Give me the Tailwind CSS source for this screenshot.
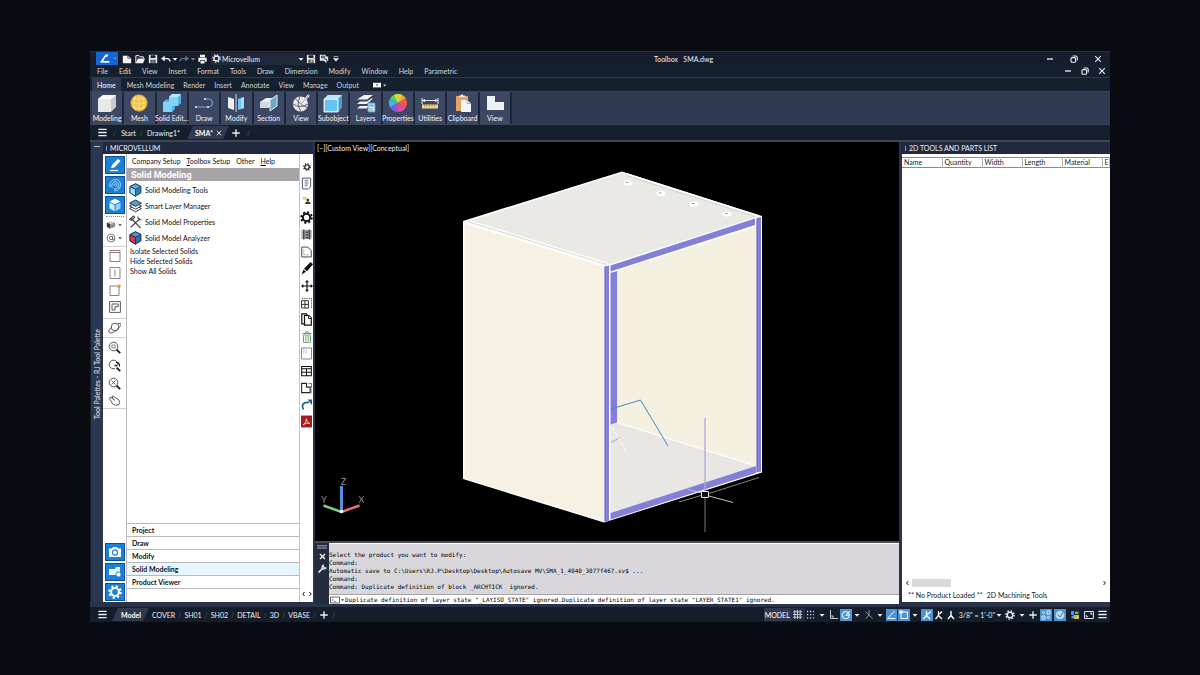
<!DOCTYPE html>
<html lang="en">
<head>
    <meta charset="UTF-8">
    <meta name="viewport" content="width=device-width, initial-scale=1.0">
    <title>Toolbox - SMA.dwg</title>
    <script src="https://cdn.jsdelivr.net/npm/@tailwindcss/browser@4"></script>
</head>
<body class="h-screen flex flex-col bg-[#0a0b10] px-[90px] pt-[51px] pb-[53px] font-['Lato',sans-serif] text-[7px] leading-[8px] text-[#eceef2]">

    <!-- shared icons -->
    <svg class="hidden">
        <symbol id="arrow" viewBox="0 0 8 8"><path d="M1.5 3h5L4 5.8z" fill="currentColor"/></symbol>
        <symbol id="menu" viewBox="0 0 12 12"><path d="M1.5 2.5h9M1.5 6h9M1.5 9.5h9" stroke="currentColor" stroke-width="1.4"/></symbol>
        <symbol id="plus" viewBox="0 0 12 12"><path d="M6 1.5v9M1.5 6h9" stroke="currentColor" stroke-width="1.6"/></symbol>
        <symbol id="gear" viewBox="0 0 16 16"><circle cx="8" cy="8" r="4.5" fill="none" stroke="currentColor" stroke-width="2.4"/><circle cx="8" cy="8" r="6.6" fill="none" stroke="currentColor" stroke-width="2.2" stroke-dasharray="2.6 2.58"/></symbol>
        <symbol id="minimize" viewBox="0 0 10 10"><path d="M2 5h6" stroke="currentColor" stroke-width="1.3"/></symbol>
        <symbol id="restore" viewBox="0 0 10 10"><rect x="2" y="3.6" width="4.6" height="4.6" rx="1" fill="none" stroke="currentColor" stroke-width="1.1"/><path d="M3.6 2h3a1.6 1.6 0 0 1 1.6 1.6v3" fill="none" stroke="currentColor" stroke-width="1.1"/></symbol>
        <symbol id="close" viewBox="0 0 10 10"><path d="M2.2 2.2l5.6 5.6M7.8 2.2L2.2 7.8" stroke="currentColor" stroke-width="1.1"/></symbol>
        <symbol id="save" viewBox="0 0 12 12"><path d="M1 1h10v10H1z" fill="#e9ebef"/><path d="M3 1.5h6v3.2H3zM3 7h6v4H3z" fill="#1b2233"/><path d="M4 8.3h4M4 9.8h4" stroke="#e9ebef" stroke-width=".8"/></symbol>
    </svg>

    <div class="flex-1 min-h-0 flex flex-col bg-[#14202d]">

        <!-- title bar -->
        <header class="h-[14px] shrink-0 flex items-center bg-[#161c2c] border-t border-[#2b303e]">
            <button aria-label="Application menu" class="ml-[6px] mr-[4px] w-[22px] h-[13px] bg-[#1266d6]">
                <svg class="w-[22px] h-[13px]" viewBox="0 0 22 13"><path d="M4 10.5L9.5 2.5h3l-1.2 2.2-1.8.3-2.3 4h6.2v1.8z" fill="#fff"/><path d="M17.5 5.5l1.3 1.5 1.3-1.5" fill="none" stroke="#8fbdf5" stroke-width=".8"/></svg>
            </button>
            <div class="flex items-center gap-[3px]">
                <button aria-label="New"><svg class="w-[10px] h-[10px]" viewBox="0 0 12 12"><path d="M1 2h6l4 3v6H1z" fill="#f2f3f5"/><path d="M7 2v3h4" fill="none" stroke="#161c2c" stroke-width=".8"/></svg></button>
                <button aria-label="Open"><svg class="w-[10px] h-[10px]" viewBox="0 0 12 12"><path d="M1 11V2h4l1 1.4h4V5" fill="none" stroke="#f2f3f5" stroke-width="1.2"/><path d="M1 11l2.4-5.5H12L9.6 11z" fill="#f2f3f5"/></svg></button>
                <button aria-label="Save"><svg class="w-[10px] h-[10px]"><use href="#save"/></svg></button>
                <button aria-label="Undo"><svg class="w-[10px] h-[10px]" viewBox="0 0 12 12"><path d="M0 5.500L4.500 2v7z" fill="#f2f3f5"/><path d="M3 5.500h4q3.500 0 4 3.500" fill="none" stroke="#f2f3f5" stroke-width="1.600"/></svg></button>
            </div>
            <svg class="w-[8px] h-[8px]"><use href="#arrow"/></svg>
            <button aria-label="Redo"><svg class="w-[10px] h-[10px] text-[#69707f]" viewBox="0 0 12 12"><path d="M12 5.500L7.500 2v7z" fill="currentColor"/><path d="M9 5.500H5q-3.500 0-4 3.500" fill="none" stroke="currentColor" stroke-width="1.400"/></svg></button>
            <svg class="w-[8px] h-[8px] text-[#69707f]"><use href="#arrow"/></svg>
            <button aria-label="Print"><svg class="w-[11px] h-[10px]" viewBox="0 0 12 12"><path d="M3 1h6v3H3zM1 4.4h10v5H9V7.6H3v1.800H1z" fill="#f2f3f5"/><path d="M3.600 8.400h4.800v3H3.600z" fill="#f2f3f5"/></svg></button>
            <label for="workspace" class="ml-[3px] pl-[1px] h-[12px] w-[94px] flex items-center bg-[#20283a]" aria-label="Workspace">
                <svg class="w-[9px] h-[9px] shrink-0"><use href="#gear"/></svg>
                <select id="workspace" class="appearance-none w-full bg-transparent text-[7px] leading-[8px] pl-[1px]"><option>Microvellum</option></select>
                <svg class="w-[8px] h-[8px] shrink-0"><use href="#arrow"/></svg>
            </label>
            <div class="flex items-center gap-[3px] ml-[1px]">
                <button aria-label="Save workspace"><svg class="w-[10px] h-[10px]" viewBox="0 0 12 12"><use href="#save"/><path d="M5.500 9.500l5-5" stroke="#d9b774" stroke-width="1.600"/></svg></button>
                <button aria-label="Save as"><svg class="w-[10px] h-[10px]" viewBox="0 0 12 12"><path d="M1 1h7v2h3v5H9v3L6 8H1z" fill="#e9ebef"/><path d="M3 2.600h3.400v2H3zM6 6h3v2" fill="none" stroke="#1b2233"/></svg></button>
                <svg class="w-[8px] h-[8px]" viewBox="0 0 8 8"><path d="M1.500 1.600h5M1.500 3.400h5L4 6.200z" stroke="currentColor" stroke-width=".6" fill="currentColor"/></svg>
            </div>
            <h1 class="flex-1 pr-[18px] text-center whitespace-pre">Toolbox   SMA.dwg</h1>
            <div class="flex gap-[14px] pr-[7px]">
                <button aria-label="Minimize"><svg class="w-[10px] h-[10px]"><use href="#minimize"/></svg></button>
                <button aria-label="Restore"><svg class="w-[10px] h-[10px]"><use href="#restore"/></svg></button>
                <button aria-label="Close"><svg class="w-[10px] h-[10px]"><use href="#close"/></svg></button>
            </div>
        </header>

        <!-- menu bar -->
        <nav class="h-[13px] shrink-0 flex items-center gap-[11px] pl-[7px] pr-[3px] border-b border-[#2f3a47] text-[#d6d9df]">
            <a href="#">File</a>
            <a href="#">Edit</a>
            <a href="#">View</a>
            <a href="#">Insert</a>
            <a href="#">Format</a>
            <a href="#">Tools</a>
            <a href="#">Draw</a>
            <a href="#">Dimension</a>
            <a href="#">Modify</a>
            <a href="#">Window</a>
            <a href="#">Help</a>
            <a href="#">Parametric</a>
            <div class="flex gap-[7px] ml-auto text-[#eceef2]">
                <button aria-label="Minimize drawing"><svg class="w-[10px] h-[10px]"><use href="#minimize"/></svg></button>
                <button aria-label="Restore drawing"><svg class="w-[10px] h-[10px]"><use href="#restore"/></svg></button>
                <button aria-label="Close drawing"><svg class="w-[10px] h-[10px]"><use href="#close"/></svg></button>
            </div>
        </nav>

        <!-- ribbon tabs -->
        <nav class="h-[13px] shrink-0 flex items-center gap-[9px] pl-[2px] text-[#d0d3da]">
            <a href="#" class="h-full px-[5px] -mr-[3px] flex items-center bg-[#2f3a50] text-white">Home</a>
            <a href="#">Mesh Modeling</a>
            <a href="#">Render</a>
            <a href="#">Insert</a>
            <a href="#">Annotate</a>
            <a href="#">View</a>
            <a href="#">Manage</a>
            <a href="#">Output</a>
            <button aria-label="Ribbon display" class="ml-[5px]"><svg class="w-[14px] h-[8px]" viewBox="0 0 14 8"><rect x="0" y="1.800" width="8" height="4.600" fill="#fff"/><circle cx="4" cy="4" r=".8" fill="#14202d"/><path d="M10 3.400h3.400l-1.700 2z" fill="#cfd3da"/></svg></button>
        </nav>

        <!-- ribbon panels -->
        <div class="h-[34px] shrink-0 bg-[#2f3a52] border-y border-[#39445b] pl-[2px]">
            <div class="w-[420px] h-full grid grid-cols-13 text-[#f4f5f9] *:flex *:flex-col *:items-center *:justify-between *:bg-[#3c4763] *:border-r-2 *:border-[#1d2638] *:whitespace-nowrap *:pt-[1px] *:pb-[2px]">
                <button><svg class="w-[22px] h-[20px]" viewBox="0 0 22 20"><path d="M2 6l5-4h13v12l-5 5H2z" fill="#c9cace"/><path d="M2 6h13v13H2z" fill="#e9e9ea"/><path d="M2 6l5-4h13l-5 4z" fill="#fafafa"/></svg>Modeling</button>
                <button><svg class="w-[22px] h-[20px]" viewBox="0 0 22 20"><circle cx="11" cy="10" r="8.300" fill="#f3c145"/><path d="M3 9q8 4 16 0M4 14q7 3 14 0M11 2v16M8 2q-4 8 0 16M14 2q4 8 0 16M5 5q6 2.500 12 0" fill="none" stroke="#fbe6a0" stroke-width=".8"/><circle cx="11" cy="10" r="8.300" fill="none" stroke="#c58f22" stroke-width=".7"/></svg>Mesh</button>
                <button><svg class="w-[22px] h-[20px]" viewBox="0 0 22 20"><path d="M2 9l3-2.500h3V4l3-3h9v9l-3 3h-3v3l-3 3H2z" fill="#49b5ea"/><path d="M2 9h6V4h9v9h-6v6H2z" fill="#85d2f7"/><path d="M8 4l3-3h9l-3 3z" fill="#b8e6fc"/></svg>Solid Edit...</button>
                <button><svg class="w-[22px] h-[20px]" viewBox="0 0 22 20"><path d="M3 14h12.500a4 4 0 0 0 0-8H12" fill="none" stroke="#83a9d6" stroke-width="1"/><path d="M2 13h2v2H2zM14 13h2v2h-2zM11 5h2v2h-2z" fill="#aecbf0"/></svg>Draw</button>
                <button><svg class="w-[22px] h-[20px]" viewBox="0 0 22 20"><path d="M3 4l6 2v11l-6-2z" fill="#efefef"/><path d="M19 4l-6 2v11l6-2z" fill="#6ec6f2"/><path d="M16 5l3-1v11l-3 1z" fill="#a5dcf8"/><path d="M11 1v18" stroke="#d7dbe4" stroke-width="1"/></svg>Modify</button>
                <button><svg class="w-[22px] h-[20px]" viewBox="0 0 22 20"><path d="M2 9l6-4h6v9H2z" fill="#f0f0f0"/><path d="M2 9h9v6H2z" fill="#d5d6d9"/><path d="M12 7l7-5v11l-7 5z" fill="#6aa7c9" stroke="#d9f1fb" stroke-width="1"/></svg>Section</button>
                <button><svg class="w-[22px] h-[20px]" viewBox="0 0 22 20"><circle cx="10.500" cy="11" r="7.600" fill="#e8e8e8"/><path d="M3 11q7 5 15 0M5 5.500q6 7 12 9M10 3.500q-4 8 1 15" fill="none" stroke="#5d6475" stroke-width="1"/><path d="M11 11l8-9" stroke="#fff" stroke-width="2.200"/><path d="M11 11l8-9" stroke="#555c6e" stroke-width=".7"/></svg>View</button>
                <button><svg class="w-[22px] h-[20px]" viewBox="0 0 22 20"><path d="M2 6l4-4h14v12l-4 5H2z" fill="#d8dbe0"/><path d="M3 7h12v11H3z" fill="#67c3f1"/><path d="M2 6l4-4h14l-4 4z" fill="#b9e6fb"/><path d="M16 6l4-4v12l-4 5z" fill="#4b9cc6"/><path d="M2 6h14v13H2z" fill="none" stroke="#e7f4fb" stroke-width=".9"/></svg>Subobject</button>
                <button><svg class="w-[22px] h-[20px]" viewBox="0 0 22 20"><path d="M2 6.500L9 2h9l-6 4.500zM2 11l3-2.500h7l4.500-3H18L12 11zM2 15.500L5 13h7l4.500-3H18l-6 5.500z" fill="#f0f0f0"/><path d="M13 10h7v9h-7z" fill="#dff1fa" stroke="#5193bd"/><path d="M14.500 11.500h4v2h-4z" fill="#4ea8d8"/><path d="M14.500 15.500h4M14.500 17.300h4" stroke="#466" stroke-width=".9" stroke-dasharray="1"/></svg>Layers</button>
                <button><svg class="w-[22px] h-[20px]" viewBox="0 0 22 20"><path d="M11 10V1a9 9 0 0 1 7.800 4.500z" fill="#f9a23a"/><path d="M11 10l7.800-4.500a9 9 0 0 1 0 9z" fill="#f0594a"/><path d="M11 10l7.800 4.500A9 9 0 0 1 11 19z" fill="#dc4a9c"/><path d="M11 10v9a9 9 0 0 1-7.800-4.500z" fill="#8d58e0"/><path d="M11 10l-7.800 4.500a9 9 0 0 1 0-9z" fill="#38b9dd"/><path d="M11 10L3.200 5.500A9 9 0 0 1 11 1z" fill="#69cb55"/><path d="M11 10L7 2a9 9 0 0 1 8 0z" fill="#d9d545"/></svg>Properties</button>
                <button><svg class="w-[22px] h-[20px]" viewBox="0 0 22 20"><path d="M3 5v6M19 5v6M3 7.500h16" stroke="#e9edf5" stroke-width="1"/><path d="M3 7.500l3-1.700v3.400zM19 7.500l-3-1.700v3.400z" fill="#e9edf5"/><path d="M3 11.500h16v4H3z" fill="#f2d58c"/><path d="M5.500 11.500v2M8 11.500v2M10.500 11.500v2M13 11.500v2M15.500 11.500v2" stroke="#8a6d2b" stroke-width=".8"/></svg>Utilities</button>
                <button><svg class="w-[22px] h-[20px]" viewBox="0 0 22 20"><path d="M4 3h12v15H4z" fill="#dfa562"/><path d="M7 4h6V2.500h-1.500L10 1 8.500 2.500H7z" fill="#e8eaee"/><path d="M9 7h6l4 3.500V19H9z" fill="#f3f4f7"/><path d="M15 7v3.500h4" fill="none" stroke="#99a2b5" stroke-width=".8"/></svg>Clipboard</button>
                <button><svg class="w-[22px] h-[20px]" viewBox="0 0 22 20"><path d="M3 3h8v6h9v8H3z" fill="#eef0f3"/></svg>View</button>
            </div>
        </div>

        <!-- drawing tabs -->
        <nav class="h-[15px] shrink-0 flex items-center pl-[7px]">
            <button aria-label="Drawing list"><svg class="w-[11px] h-[11px]"><use href="#menu"/></svg></button>
            <span class="px-[5px] text-[#4f5a6a]">/</span>
            <a href="#">Start</a>
            <span class="px-[4px] text-[#4f5a6a]">/</span>
            <a href="#">Drawing1*</a>
            <div class="ml-[7px] h-[13px] flex items-center gap-[2px] pl-[8px] pr-[6px] bg-[#2f3a50] [clip-path:polygon(6px_0,100%_0,calc(100%-6px)_100%,0_100%)]">
                <a href="#" class="font-bold text-white">SMA*</a>
                <button aria-label="Close SMA"><svg class="w-[8px] h-[8px]"><use href="#close"/></svg></button>
            </div>
            <button aria-label="New drawing" class="ml-[2px]"><svg class="w-[10px] h-[10px]"><use href="#plus"/></svg></button>
            <span class="px-[6px] text-[#4f5a6a]">/</span>
        </nav>

        <!-- workspace -->
        <main class="flex-1 min-h-0 flex bg-[#2b3348] border-t-2 border-[#3f4552]">

            <!-- tool palette -->
            <aside class="w-[223px] shrink-0 mb-[5px] flex">
                <div class="w-[13px] flex flex-col items-center bg-[#2a3750] border-l border-[#141b2a]">
                    <span class="mt-[4px] w-[6px] h-px bg-[#b9c0cc]"></span>
                    <span class="mt-[182px] [writing-mode:vertical-rl] rotate-180 whitespace-nowrap">Tool Palettes - RJ Tool Palette</span>
                </div>
                <div class="flex-1 flex flex-col">
                    <h2 class="h-[12px] flex items-center gap-[3px] pl-[3px] bg-[#202940]"><span class="w-px h-[5px] bg-[#8d96a8]"></span>MICROVELLUM</h2>
                    <div class="flex-1 flex bg-white text-[#111115]">

                        <div class="w-[24px] flex flex-col items-center pt-[2px] pb-px border-r border-[#b9b9bd] text-[#4b4b4f]">
                            <div class="flex flex-col gap-[2px] *:w-[20px] *:h-[18px] *:bg-[#1b80d8] *:border *:border-[#0b4f97] *:flex *:items-center *:justify-center">
                                <button aria-label="Draw"><svg class="w-[14px] h-[14px]" viewBox="0 0 14 14"><path d="M3 10l1-3 6-6 2.500 2-6 6.500z" fill="#fff"/><path d="M2 12.500h8" stroke="#fff" stroke-width="1.200"/></svg></button>
                                <button aria-label="Texture"><svg class="w-[14px] h-[14px]" viewBox="0 0 14 14" fill="none" stroke="#a9dcff" stroke-width="1"><path d="M2 9C1 4 5 1 8.500 1.500S13 6 12 9s-4 4.500-6 3.500"/><path d="M4 9.500C3 6 5.500 3.500 8 3.800S11 7 10 9s-3 2.500-4 1.500"/><path d="M6 8c0-2 1-2.500 2-2.200S9 8 7.500 8.500"/></svg></button>
                                <button aria-label="Solids"><svg class="w-[14px] h-[14px]" viewBox="0 0 14 14"><path d="M7 .8l5.500 2.700L7 6.200 1.500 3.500z" fill="#fff"/><path d="M1.500 4.500l5 2.500v6.200l-5-2.700z" fill="#d4efff"/><path d="M12.500 4.500l-5 2.500v6.200l5-2.700z" fill="#8fd0fa"/></svg></button>
                            </div>
                            <div class="w-[18px] mt-[2px] border-t border-dotted border-[#8a8a8e]"></div>
                            <div class="h-[30px] w-full py-[2px] flex flex-col justify-around items-start pl-[3px] border-b border-[#d0d0d3]">
                                <button aria-label="Visual style" class="flex items-center gap-px"><svg class="w-[10px] h-[10px]" viewBox="0 0 12 12"><path d="M1 3l4 1.500v6L1 8z" fill="#333"/><path d="M5 4.500L11 3v5l-6 2.500z" fill="#8d9097"/><path d="M1 3l5-1.500L11 3 5 4.500z" fill="#c6c8cc"/></svg><svg class="w-[6px] h-[6px]"><use href="#arrow"/></svg></button>
                                <button aria-label="Orbit" class="flex items-center gap-px"><svg class="w-[10px] h-[10px]" viewBox="0 0 12 12" fill="none" stroke="currentColor" stroke-width=".9"><circle cx="6" cy="6" r="4.700"/><circle cx="6" cy="6" r="2"/><path d="M8 4v4h2.500"/></svg><svg class="w-[6px] h-[6px]"><use href="#arrow"/></svg></button>
                            </div>
                            <div class="h-[72px] w-full pb-[3px] flex flex-col justify-around items-center border-b border-[#d0d0d3]">
                                <button aria-label="Sheet"><svg class="w-[12px] h-[12px]" viewBox="0 0 12 12"><path d="M1 .5h10v11H1zM1 2.500h10" fill="none" stroke="#8a6f72" stroke-width=".9"/></svg></button>
                                <button aria-label="Split sheet"><svg class="w-[12px] h-[12px]" viewBox="0 0 12 12"><path d="M1 .5h10v11H1zM6 2.500v7" fill="none" stroke="#8a7376" stroke-width=".9"/></svg></button>
                                <button aria-label="New sheet"><svg class="w-[12px] h-[12px]" viewBox="0 0 12 12"><path d="M1 2h9v9.500H1z" fill="none" stroke="#77777b" stroke-width=".9"/><circle cx="10" cy="2.200" r="1.800" fill="#e0a040"/></svg></button>
                                <button aria-label="Offset"><svg class="w-[12px] h-[12px]" viewBox="0 0 12 12" fill="none" stroke="currentColor" stroke-width=".9"><path d="M.6.600h10.800v10.800H.600z"/><path d="M3 9V3h6.300v2.700H6V9z"/></svg></button>
                            </div>
                            <div class="h-[19px] w-full flex items-center justify-center border-b border-[#d0d0d3]">
                                <button aria-label="Free orbit"><svg class="w-[13px] h-[12px]" viewBox="0 0 13 12" fill="none" stroke="currentColor" stroke-width=".9"><circle cx="7" cy="5" r="3.800"/><path d="M4 5C0 8 0 11 3 11s6-3 9-6.500S11 1 9.500 1.800"/></svg></button>
                            </div>
                            <div class="h-[71px] w-full flex flex-col justify-around items-center border-b border-[#d0d0d3]">
                                <button aria-label="Zoom window"><svg class="w-[13px] h-[13px]" viewBox="0 0 13 13"><circle cx="5.500" cy="5.500" r="4.300" fill="none" stroke="#55555a"/><path d="M3.800 4h3.400v3H3.800z" fill="none" stroke="#77777b" stroke-width=".8"/><path d="M8.600 8.600l3.600 3.600" stroke="#1b1b1f" stroke-width="1.900"/></svg></button>
                                <button aria-label="Zoom previous"><svg class="w-[13px] h-[13px]" viewBox="0 0 13 13"><path d="M9.800 5.500A4.300 4.300 0 1 0 7 9.500" fill="none" stroke="#55555a"/><path d="M8 3.500q3.500-.5 3.500 4M6.500 6.500h3" fill="none" stroke="#1b1b1f" stroke-width="1.300"/><path d="M8.600 8.600l3.600 3.600" stroke="#1b1b1f" stroke-width="1.900"/></svg></button>
                                <button aria-label="Zoom extents"><svg class="w-[13px] h-[13px]" viewBox="0 0 13 13"><circle cx="5.500" cy="5.500" r="4.300" fill="none" stroke="#55555a"/><path d="M3.500 3.500l4 4M7.500 3.500l-4 4" stroke="#55555a" stroke-width=".9"/><path d="M8.600 8.600l3.600 3.600" stroke="#1b1b1f" stroke-width="1.900"/></svg></button>
                                <button aria-label="Pan"><svg class="w-[13px] h-[11px]" viewBox="0 0 13 11" fill="none" stroke="currentColor" stroke-width=".9"><path d="M3 6L1.500 3.500Q1.500 2 3 2.500L5 4 4 1.500Q5 .5 6.500 2L11 5q1.500 3-.5 5H7Q4 9.500 3 6zM5 4l2 1.500"/></svg></button>
                            </div>
                            <div class="mt-auto flex flex-col gap-[2px] *:w-[20px] *:h-[18px] *:bg-[#1b80d8] *:border *:border-[#0b4f97] *:flex *:items-center *:justify-center">
                                <button aria-label="Camera"><svg class="w-[14px] h-[12px]" viewBox="0 0 14 12"><path d="M1 2.500h3L5 1h4l1 1.500h3V11H1z" fill="#fff"/><circle cx="7" cy="6.500" r="2.600" fill="none" stroke="#1b80d8" stroke-width="1.200"/></svg></button>
                                <button aria-label="Project settings"><svg class="w-[14px] h-[12px]" viewBox="0 0 14 12"><path d="M1 3h6l1-2h4v8H1z" fill="#e8f5ff"/><circle cx="10.500" cy="8.500" r="2.600" fill="#fff" stroke="#1b80d8"/></svg></button>
                                <button aria-label="Settings" class="text-white"><svg class="w-[14px] h-[14px]"><use href="#gear"/></svg></button>
                            </div>
                        </div>

                        <div class="flex-1 flex flex-col">
                            <nav class="h-[14px] flex items-center gap-[6px] pl-[5px]">
                                <a href="#">Company Setup</a>
                                <a href="#"><u>T</u>oolbox Setup</a>
                                <a href="#">Other</a>
                                <a href="#"><u>H</u>elp</a>
                            </nav>
                            <h3 class="h-[13px] flex items-center pl-[4px] bg-[#a7a4a7] text-white text-[9px] font-bold font-['Roboto',sans-serif]">Solid Modeling</h3>
                            <ul class="pt-px pl-[2px] *:h-[16px] *:flex *:items-center *:gap-[3px]">
                                <li><svg class="w-[13px] h-[14px]" viewBox="0 0 13 14" stroke="#16364f" stroke-width=".8"><path d="M6.500.800l5.500 2.700v6.500l-5.500 3.200L1 10V3.500z" fill="#2f80bd"/><path d="M1 3.500l5.500 2.700v7L1 10z" fill="#a9dbf7"/><path d="M1 3.500L6.500.800l5.500 2.700-5.500 2.700z" fill="#5eaee0"/></svg><a href="#">Solid Modeling Tools</a></li>
                                <li><svg class="w-[13px] h-[14px]" viewBox="0 0 13 14" stroke="#182838" stroke-width=".9"><path d="M.6 9.500L6.500 6.500l5.900 3-5.900 3.200z" fill="#fff"/><path d="M.6 7L6.500 4l5.900 3-5.900 3.200z" fill="#fff"/><path d="M.6 4.200L6.500 1l5.900 3.200-5.900 3.200z" fill="#4f9fd4"/></svg><a href="#">Smart Layer Manager</a></li>
                                <li><svg class="w-[13px] h-[14px]" viewBox="0 0 13 14" fill="none" stroke="#4a4a4e" stroke-width="1.100"><path d="M2 3l9.500 10M11 3.500L1.500 12.500M.6 4.500L4.500 1l1.200 1.200-3 3.200zM9 1.500q-1 3 3.400 3.200"/></svg><a href="#">Solid Model Properties</a></li>
                                <li><svg class="w-[13px] h-[14px]" viewBox="0 0 13 14" stroke="#16263f" stroke-width=".8"><path d="M6.500.800l5.500 2.700v6.500l-5.500 3.200L1 10V3.500z" fill="#2b6fb0"/><path d="M1 3.500l5.500 2.700v7L1 10z" fill="#d9364a"/><path d="M1 3.500L6.500.800l5.500 2.700-5.500 2.700z" fill="#4b9bd6"/></svg><a href="#">Solid Model Analyzer</a></li>
                            </ul>
                            <ul class="pl-[3px] leading-[10px]">
                                <li><a href="#">Isolate Selected Solids</a></li>
                                <li><a href="#">Hide Selected Solids</a></li>
                                <li><a href="#">Show All Solids</a></li>
                            </ul>
                            <ul class="mt-auto mb-[13px] border-b border-[#b9b9bd] font-bold *:h-[13px] *:pl-[5px] *:pb-px *:flex *:items-center *:border-t *:border-[#b9b9bd]">
                                <li><a href="#">Project</a></li>
                                <li><a href="#">Draw</a></li>
                                <li><a href="#">Modify</a></li>
                                <li class="bg-[#e8f7fd]"><a href="#">Solid Modeling</a></li>
                                <li><a href="#">Product Viewer</a></li>
                            </ul>
                        </div>

                        <div class="w-[14px] flex flex-col items-center pt-[4px] border-l border-[#c3c3c7] *:h-[17px] *:flex *:items-center">
                            <button aria-label="Options"><svg class="w-[8px] h-[8px]"><use href="#gear"/></svg></button>
                            <button aria-label="Report"><svg class="w-[11px] h-[13px]" viewBox="0 0 12 13" fill="none" stroke="#34495e"><path d="M1.500.600h9v9.400L8 12.400H1.500z"/><path d="M4 3h4M4 5h4M4 7h4M4 9h3" stroke-width=".8"/></svg></button>
                            <button aria-label="Users"><svg class="w-[9px] h-[9px]" viewBox="0 0 10 10"><path d="M1 1h4v3H1z" fill="#e3cf58"/><circle cx="6.500" cy="4.500" r="1.500" fill="#333"/><path d="M3.500 9q0-3 3-3t3 3z" fill="#333"/></svg></button>
                            <button aria-label="Setup"><svg class="w-[13px] h-[13px]"><use href="#gear"/></svg></button>
                            <button aria-label="Library"><svg class="w-[11px] h-[11px]" viewBox="0 0 12 11"><path d="M.5.500h11v10H.500z" fill="#9a9aa0"/><path d="M3 0v11M9 0v11M5 3h3M5 6h3M5 9h3" stroke="#222"/><path d="M1 2h1M1 5h1M1 8h1" stroke="#fff"/></svg></button>
                            <button aria-label="Page"><svg class="w-[11px] h-[12px]" viewBox="0 0 12 12" fill="none" stroke="#3a3a3e"><path d="M.8.600h6.500l3.900 4v6.800H.800z"/><path d="M3 3v6h6" stroke-width=".7" stroke-dasharray="1"/></svg></button>
                            <button aria-label="Edit"><svg class="w-[12px] h-[13px]" viewBox="0 0 12 13"><path d="M9.500 0l2.500 2.300-6 7-3-2.600z" fill="#111"/><path d="M2.600 7.500l2.400 2.200L.5 12.500z" fill="#111"/></svg></button>
                            <button aria-label="Move"><svg class="w-[12px] h-[12px]" viewBox="0 0 12 12"><path d="M6 1v10M1 6h10" stroke="#111" stroke-width="1.200"/><path d="M6 0l2 2.300H4zM6 12l2-2.300H4zM0 6l2.300-2v4zM12 6L9.700 4v4z" fill="#111"/></svg></button>
                            <button aria-label="Align"><svg class="w-[11px] h-[12px]" viewBox="0 0 12 12" fill="none" stroke="#222"><path d="M.6 3.500h7.500v8H.600zM.6 7.500h7.500M4.300 3.500v8"/><path d="M1 1h10.500v11" stroke-dasharray="1 1"/></svg></button>
                            <button aria-label="Copy"><svg class="w-[11px] h-[13px]" viewBox="0 0 11 13" fill="#fff" stroke="#111" stroke-width="1.200"><path d="M.8.800h5v10h-5z"/><path d="M3.500 2.500H8l2.300 2.500v7.200H3.500z"/><path d="M7.500 2.500v3h3" stroke-width=".9"/></svg></button>
                            <button aria-label="Delete"><svg class="w-[10px] h-[12px]" viewBox="0 0 10 12" fill="none" stroke="#6f9d70"><path d="M.5 2.500h9M3.500 2.500V.800h3v1.700M1.500 4h7v7.400h-7zM3.800 5v5.500M6.200 5v5.500"/></svg></button>
                            <button aria-label="Elevation"><svg class="w-[11px] h-[13px]" viewBox="0 0 12 13" fill="none" stroke="#77777b"><path d="M.5.500h11v12H.500z"/><path d="M2 3h5M2 5h5M3 2v5M5.500 2v5" stroke="#8ea3c4" stroke-width=".7" stroke-dasharray="1"/></svg></button>
                            <button aria-label="Cabinet"><svg class="w-[11px] h-[12px]" viewBox="0 0 12 12" fill="none" stroke="#111"><path d="M.7 1h10.600v10.300H.700zM.7 3.500h10.600M6 3.500v7.800M.7 7.300h10.600" stroke-width="1.100"/></svg></button>
                            <button aria-label="Room"><svg class="w-[11px] h-[12px]" viewBox="0 0 12 12" fill="none" stroke="#222"><path d="M.7 1H6v4h4v6H.700z" stroke-width="1.200"/><path d="M8 1h3.500v4" stroke-width=".7"/><path d="M11.500 5v7" stroke-dasharray="1" stroke-width=".7"/></svg></button>
                            <button aria-label="Refresh"><svg class="w-[11px] h-[11px]" viewBox="0 0 11 11"><path d="M2.500 10.500Q-1 3 8 3.500" fill="none" stroke="#1d5f86" stroke-width="1.700"/><path d="M6.500.500L11 .5V6z" fill="#1d5f86"/></svg></button>
                            <button aria-label="PDF"><svg class="w-[11px] h-[13px]" viewBox="0 0 12 13"><path d="M0 0h12v13H0z" fill="#a91b1e"/><path d="M2.500 10Q6.500 7 5.800 3.500 5.800 7 9.500 8.500 5.500 7.800 2.500 10z" fill="none" stroke="#fff" stroke-width=".8"/></svg></button>
                            <div class="mt-auto justify-center"><svg class="w-[12px] h-[6px]" viewBox="0 0 12 6" fill="none" stroke="#111"><path d="M3.500 1L1.800 3l1.700 2M8.500 1l1.700 2-1.700 2"/></svg></div>
                        </div>
                    </div>
                </div>
            </aside>

            <!-- model view and command line -->
            <section class="flex-1 min-w-0 ml-[2px] mb-[3px] flex flex-col">
                <div class="relative flex-1 min-h-0 bg-black">
                    <span class="absolute left-[2px] top-[2px]">[−][Custom View][Conceptual]</span>
                    <svg class="block w-full h-full" viewBox="315 142 584 399" preserveAspectRatio="xMidYMid slice">
                        <!-- cabinet -->
                        <path d="M463 221L622 171.500 762 216V472.500L604 522.500 463 479z" fill="#fff"/>
                        <path d="M464.500 223.500L604 267v254L464.500 478.500z" fill="#f7f1e4"/>
                        <path d="M467 221.500L622 173l136 43.500L609 264.500z" fill="#eae9e6"/>
                        <path d="M470 221l139 43M627 174l130 41.500" stroke="#fff" stroke-width="1.400"/>
                        <path d="M468 221.600l139 43M626 175.500l129 41" stroke="#c9c8c6" stroke-width=".7"/>
                        <path d="M617 270.500l139-43.500v239l-139-43.500z" fill="#f5f1e1"/>
                        <path d="M610.500 422.500l7 0L756 466 610.500 513z" fill="#e8e7e3"/>
                        <path d="M617 422.500L756 466" stroke="#fff" stroke-width="1.200"/>
                        <path d="M610.500 265.500L755 218.500v6.500L610.500 271.500z" fill="#8480d8"/>
                        <path d="M604.500 266.500l4.500-1V521l-4.500 1z" fill="#8480d8"/>
                        <path d="M610.500 273l6.500-2v151.500l-6.500 2z" fill="#8480d8"/>
                        <path d="M756.500 218l4.500-1v254.500l-4.500 1z" fill="#8480d8"/>
                        <path d="M610.500 513L756 466v7L610.500 519.500z" fill="#8480d8"/>
                        <path d="M605 267v254M757 219v253" stroke="#5f5cad" stroke-width=".6"/>
                        <g fill="#fff"><ellipse cx="628" cy="183" rx="4.500" ry="2.600"/><ellipse cx="661" cy="193.500" rx="4.500" ry="2.600"/><ellipse cx="694" cy="204" rx="4.500" ry="2.600"/><ellipse cx="727" cy="214" rx="4.500" ry="2.600"/></g>
                        <path d="M626 182.500h2.500M659 193h2.500M692 203.500h2.500M725 213.500h2.500" stroke="#888" stroke-width=".9"/>
                        <path d="M611 409l29.500-9L668 446" fill="none" stroke="#4a86b8" stroke-width="1"/>
                        <path d="M611 442.500l9-5" stroke="#b4a9dd" stroke-width="1.200"/>
                        <path d="M612 427l15 26" stroke="#fff" stroke-width="1" stroke-dasharray="4 2"/>
                        <!-- crosshair -->
                        <path d="M705 418v73" stroke="#b6a4d6" stroke-width="1.300"/>
                        <path d="M705 498v34" stroke="#73757a" stroke-width="1"/>
                        <path d="M679 502l22-6.500M709 493.500l50-16" stroke="#85857a" stroke-width="1"/>
                        <path d="M687 489l14 4M709 496l24 6.500" stroke="#b9c2bd" stroke-width="1"/>
                        <path d="M701.500 491.500h7v6h-7z" fill="#111" stroke="#e5e5e5" stroke-width="1"/>
                        <!-- ucs axes -->
                        <path d="M341.500 512V486" stroke="#5a8fe0" stroke-width="3"/>
                        <path d="M341.500 512l-18-6.500" stroke="#7bd08a" stroke-width="2.400"/>
                        <path d="M341.500 512l18-6.500" stroke="#e5727c" stroke-width="2.400"/>
                        <circle cx="341.500" cy="511.500" r="1.800" fill="#fff"/>
                        <g fill="#8b8f96" font-size="9" text-anchor="middle"><text x="343.500" y="485">Z</text><text x="324" y="503">Y</text><text x="361.500" y="503">X</text></g>
                    </svg>
                </div>
                <div class="h-[63px] shrink-0 flex border-t-2 border-[#4a4b56] bg-[#252b3f]">
                    <div class="w-[14px] flex flex-col items-center pt-[2px] gap-[3px]">
                        <svg class="w-[10px] h-[4px]" viewBox="0 0 10 4"><path d="M0 .800h10M0 3h10" stroke="#a6abb7"/></svg>
                        <button aria-label="Close command line"><svg class="w-[9px] h-[9px]" viewBox="0 0 10 10"><path d="M2.200 2.200l5.600 5.600M7.800 2.200L2.200 7.800" stroke="currentColor" stroke-width="1.600"/></svg></button>
                        <button aria-label="Customize"><svg class="w-[10px] h-[10px]" viewBox="0 0 10 10"><path d="M1.500 8.500L6 4" stroke="currentColor" stroke-width="1.700"/><path d="M6 1.200Q4.500 3 5.500 4.500T9 4L7 3.500z" fill="none" stroke="currentColor" stroke-width="1.200"/></svg></button>
                    </div>
                    <div class="flex-1 min-w-0 flex flex-col font-['DejaVu_Sans_Mono',monospace] text-[6px] text-black border-t border-white">
                        <div class="flex-1 pt-[7px] bg-[#d9d7db] *:whitespace-pre">
                            <p>Select the product you want to modify:</p>
                            <p>Command:</p>
                            <p>Automatic save to C:\Users\RJ.P\Desktop\Desktop\Autosave MV\SMA_1_4940_3077f467.sv$ ...</p>
                            <p>Command:</p>
                            <p>Command: Duplicate definition of block _ARCHTICK  ignored.</p>
                        </div>
                        <label for="command" aria-label="Command" class="h-[10px] flex items-center bg-white border-t border-[#a5a3a8]">
                            <svg class="w-[16px] h-[8px] shrink-0" viewBox="0 0 16 8"><path d="M1.500 1h9v6h-9z" fill="none" stroke="#444" stroke-width=".8"/><path d="M3 3l1.300 1L3 5M5 5.500h2" fill="none" stroke="#666" stroke-width=".7"/><path d="M12 3.200h3.200L13.600 5z" fill="#333"/></svg>
                            <input id="command" class="flex-1 min-w-0 bg-transparent text-[6px] leading-[8px] outline-none" value='Duplicate definition of layer state "_LAYISO_STATE" ignored.Duplicate definition of layer state "LAYER_STATE1" ignored.'>
                        </label>
                    </div>
                </div>
            </section>

            <!-- parts list -->
            <aside class="w-[209px] shrink-0 ml-[2px] mb-[5px] flex flex-col">
                <h2 class="h-[12px] flex items-center gap-[3px] pl-[4px] bg-[#202940]"><span class="w-px h-[5px] bg-[#8d96a8]"></span>2D TOOLS AND PARTS LIST</h2>
                <div class="flex-1 ml-px flex flex-col bg-white text-[#1b1b1f] pt-[3px]">
                    <table class="w-full table-fixed border-y border-[#8a8a8e]">
                        <thead>
                            <tr class="h-[10px] *:pl-[2px] *:pb-px *:text-left *:font-normal *:border-r *:border-[#b5b5b9]">
                                <th class="w-[40px]">Name</th>
                                <th class="w-[40px]">Quantity</th>
                                <th class="w-[40px]">Width</th>
                                <th class="w-[40px]">Length</th>
                                <th class="w-[40px]">Material</th>
                                <th>E</th>
                            </tr>
                        </thead>
                    </table>
                    <div class="mt-auto h-[12px] flex items-center px-[3px]">
                        <svg class="w-[5px] h-[6px]" viewBox="0 0 5 6"><path d="M3.500 1L1.500 3l2 2" fill="none" stroke="#111"/></svg>
                        <span class="ml-[2px] w-[39px] h-[8px] bg-[#dadadd]"></span>
                        <svg class="ml-auto w-[5px] h-[6px]" viewBox="0 0 5 6"><path d="M1.500 1l2 2-2 2" fill="none" stroke="#111"/></svg>
                    </div>
                    <div class="h-[13px] flex items-center gap-[4px] pl-[6px] pb-[2px]">
                        <a href="#">** No Product Loaded **</a>
                        <a href="#">2D Machining Tools</a>
                    </div>
                </div>
            </aside>
        </main>

        <!-- layout tabs and status bar -->
        <footer class="h-[15px] shrink-0 flex items-center pl-[7px] pr-px bg-[#131d2c]">
            <button aria-label="Layout list"><svg class="w-[11px] h-[11px]"><use href="#menu"/></svg></button>
            <a href="#" class="ml-[4px] h-[13px] flex items-center pl-[9px] pr-[8px] bg-[#2f3a50] font-bold text-white [clip-path:polygon(6px_0,100%_0,calc(100%-6px)_100%,0_100%)]">Model</a>
            <nav class="flex items-center gap-[3px] pl-[3px] *:even:text-[#4f5a6a]">
                <a href="#">COVER</a><span>/</span>
                <a href="#">SH01</a><span>/</span>
                <a href="#">SH02</a><span>/</span>
                <a href="#">DETAIL</a><span>/</span>
                <a href="#">3D</a><span>/</span>
                <a href="#">VBASE</a><span>/</span>
                <button aria-label="New layout"><svg class="w-[10px] h-[10px]"><use href="#plus"/></svg></button><span>/</span>
            </nav>

            <div class="ml-auto h-[13px] flex items-center">
                <button class="h-full px-px bg-[#2f3a50] text-white">MODEL</button>
                <button aria-label="Grid" class="w-[14px] h-full flex items-center justify-center bg-[#232d42]"><svg class="w-[9px] h-[9px]" viewBox="0 0 10 10" stroke="#e3e6eb" stroke-width=".9"><path d="M2 0v10M5 0v10M8 0v10M0 2h10M0 5h10M0 8h10"/></svg></button>
                <button aria-label="Snap" class="w-[12px] flex justify-center"><svg class="w-[9px] h-[9px]" viewBox="0 0 10 10" stroke="#d5d8de" stroke-width="1.500" stroke-dasharray="1.500 2"><path d="M1 1.700h8M1 5.200h8M1 8.700h8"/></svg></button>
                <button aria-label="Snap menu" class="w-[11px] flex justify-center"><svg class="w-[8px] h-[8px]"><use href="#arrow"/></svg></button>
                <button aria-label="Ortho" class="w-[12px] flex justify-center"><svg class="w-[10px] h-[10px]" viewBox="0 0 10 10" fill="none" stroke="#c5c9d1"><path d="M1.500 0v8.500H9M1.500 6H4v2.500"/></svg></button>
                <button aria-label="Polar tracking" class="w-[12px] h-[12px] flex items-center justify-center bg-[#4d94d3]"><svg class="w-[10px] h-[10px]" viewBox="0 0 10 10" fill="none" stroke="#fff"><circle cx="4.800" cy="5.200" r="3.600"/><path d="M9 1L4.800 5.200H9"/></svg></button>
                <button aria-label="Polar menu" class="w-[11px] flex justify-center"><svg class="w-[8px] h-[8px]"><use href="#arrow"/></svg></button>
                <button aria-label="Isometric" class="w-[12px] flex justify-center"><svg class="w-[10px] h-[10px]" viewBox="0 0 10 10" fill="none" stroke="#8d95a3"><path d="M1.500 1.500l7 7M5 0v5L2 8.500"/></svg></button>
                <button aria-label="Isometric menu" class="w-[11px] flex justify-center"><svg class="w-[8px] h-[8px]"><use href="#arrow"/></svg></button>
                <button aria-label="Object tracking" class="w-[12px] h-[12px] flex items-center justify-center bg-[#4d94d3] border-r border-[#1d3652]"><svg class="w-[10px] h-[10px]" viewBox="0 0 10 10" fill="none" stroke="#fff"><path d="M8.500 1L1.500 8.500h8"/></svg></button>
                <button aria-label="Object snap" class="w-[12px] h-[12px] flex items-center justify-center bg-[#4d94d3]"><svg class="w-[10px] h-[10px]" viewBox="0 0 10 10" fill="none" stroke="#fff"><path d="M2 2h6.500v6.500H2z"/><path d="M.5.500h3v3h-3z" fill="#fff" stroke="none"/></svg></button>
                <button aria-label="Snap options" class="w-[11px] flex justify-center"><svg class="w-[8px] h-[8px]"><use href="#arrow"/></svg></button>
                <button aria-label="Annotation visibility" class="w-[12px] h-[12px] flex items-center justify-center bg-[#4d94d3]"><svg class="w-[10px] h-[10px]" viewBox="0 0 10 10" fill="none" stroke="#fff" stroke-width="1.300"><path d="M4.500 1v4.500L1.500 9M4.500 5.500L8 9M4.500 5L9 1.500"/></svg></button>
                <button aria-label="Auto scale" class="w-[12px] flex justify-center"><svg class="w-[10px] h-[10px]" viewBox="0 0 10 10" fill="none" stroke="#fff" stroke-width="1.300"><path d="M4.500 1v4.500L1.500 9M4.500 5.500L8 9M5.500 4L8 1.500"/></svg></button>
                <button aria-label="Annotation scale" class="w-[13px] flex justify-center"><svg class="w-[10px] h-[10px]" viewBox="0 0 10 10" fill="none" stroke="#fff" stroke-width="1.400"><path d="M5 1v4.500L2 9M5 5.500L8 9"/></svg></button>
                <button class="flex items-center pl-px whitespace-nowrap">3/8" = 1'-0"<svg class="w-[8px] h-[8px]"><use href="#arrow"/></svg></button>
                <button aria-label="Workspace switching" class="w-[14px] flex justify-center"><svg class="w-[10px] h-[10px]"><use href="#gear"/></svg></button>
                <button aria-label="Workspace menu" class="w-[9px] flex justify-center"><svg class="w-[8px] h-[8px]"><use href="#arrow"/></svg></button>
                <button aria-label="Annotation monitor" class="w-[14px] flex justify-center"><svg class="w-[10px] h-[10px]"><use href="#plus"/></svg></button>
                <button aria-label="Isolate" class="w-[14px] h-[12px] flex items-center justify-center bg-[#4d94d3] border-r-2 border-[#131d2c]"><svg class="w-[10px] h-[10px]" viewBox="0 0 10 10" fill="none" stroke="#dff0ff"><path d="M1 6h3v3H1zM6 1h3v3H6z"/><circle cx="2.500" cy="2.500" r="1"/><circle cx="7.500" cy="7.500" r="1"/></svg></button>
                <button aria-label="Hardware acceleration" class="w-[14px] h-[12px] flex items-center justify-center bg-[#4d94d3] border-r-2 border-[#131d2c]"><svg class="w-[10px] h-[10px]" viewBox="0 0 10 10"><circle cx="5" cy="5" r="4.300" fill="#b7dcf8"/><path d="M2.500 4.500L5 7l3-4.500" fill="none" stroke="#3477ad"/></svg></button>
                <button aria-label="Trusted source" class="w-[14px] flex justify-center"><svg class="w-[10px] h-[10px]" viewBox="0 0 10 10"><path d="M1 1h3v4H1z" fill="#4d94d3"/><path d="M4 5h5v4H4z" fill="#d9c24c"/><path d="M5 1.500h3.500V4H5z" fill="#5fb86b"/><circle cx="3" cy="7" r="1.600" fill="#5b9be0"/></svg></button>
                <button aria-label="Clean screen" class="w-[14px] flex justify-center"><svg class="w-[10px] h-[10px]" viewBox="0 0 10 10" fill="none" stroke="#e3e6eb"><path d="M.6 1.500h8.800v7H.600zM6 3.200h1.700V5M4 6.800H2.300V5"/></svg></button>
                <button aria-label="Customization" class="w-[13px] flex justify-center"><svg class="w-[11px] h-[11px]"><use href="#menu"/></svg></button>
            </div>
        </footer>
    </div>
</body>
</html>
